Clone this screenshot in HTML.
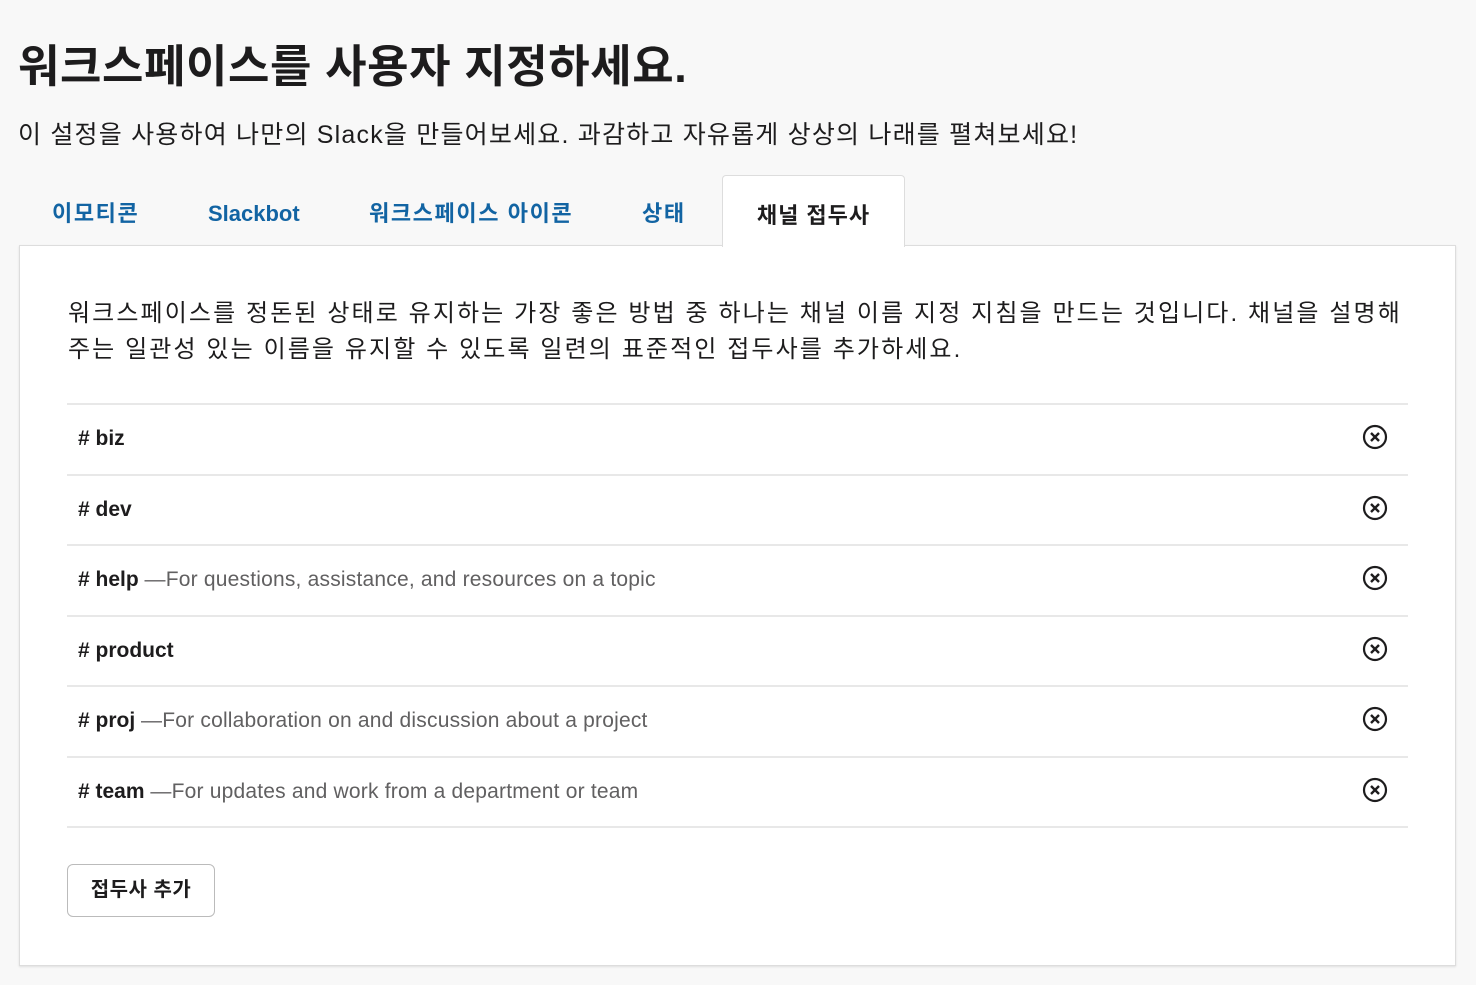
<!DOCTYPE html>
<html><head><meta charset="utf-8"><style>
*{box-sizing:border-box;margin:0;padding:0}
body{width:1476px;height:985px;background:#f8f8f8;font-family:"Liberation Sans","Noto Sans CJK KR",sans-serif;color:#1d1c1d;position:relative;overflow:hidden}
h1{position:absolute;left:18px;top:30px;font-size:45px;font-weight:bold;letter-spacing:0.6px}
.sub{position:absolute;left:18px;top:115px;font-size:25px;letter-spacing:1.2px}
.tab{position:absolute;top:198px;height:32px;line-height:32px;font-size:22px;font-weight:bold;color:#1264a3;letter-spacing:1.6px}
.active{position:absolute;left:722px;top:175px;width:183px;height:72px;background:#fff;border:1px solid #ddd;border-bottom:none;border-radius:4px 4px 0 0;z-index:2;color:#1d1c1d;font-size:22px;font-weight:bold;text-align:center;padding-top:22px;letter-spacing:1px}
.panel{position:absolute;left:19px;top:245px;width:1437px;height:721px;background:#fff;border:1px solid #ddd;box-shadow:0 1px 2px rgba(0,0,0,.1)}
.desc{position:absolute;left:48px;top:50px;font-size:24px;line-height:36px;width:1380px;letter-spacing:2.1px;white-space:nowrap}
.list{position:absolute;left:47px;top:157px;width:1341px;border-top:2px solid #e8e8e8}
.row{height:70.5px;border-bottom:2px solid #e8e8e8;position:relative;font-size:21px;padding-left:11px;line-height:68px}
.row b{font-weight:bold}
.row span{color:#616061;letter-spacing:0.2px}
.x{position:absolute;right:20px;top:19px;width:26px;height:26px}
.btn{position:absolute;left:47px;top:618px;width:148px;height:53px;border:1px solid #bbb;border-radius:6px;font-size:20px;font-weight:bold;text-align:center;line-height:50px;letter-spacing:0.5px}
</style></head><body>
<h1>워크스페이스를 사용자 지정하세요.</h1>
<div class="sub">이 설정을 사용하여 나만의 Slack을 만들어보세요. 과감하고 자유롭게 상상의 나래를 펼쳐보세요!</div>
<div class="tab" style="left:52px">이모티콘</div>
<div class="tab" style="left:208px;letter-spacing:0">Slackbot</div>
<div class="tab" style="left:369px">워크스페이스 아이콘</div>
<div class="tab" style="left:642px">상태</div>
<div class="active">채널 접두사</div>
<div class="panel">
<div class="desc">워크스페이스를 정돈된 상태로 유지하는 가장 좋은 방법 중 하나는 채널 이름 지정 지침을 만드는 것입니다. 채널을 설명해<br>주는 일관성 있는 이름을 유지할 수 있도록 일련의 표준적인 접두사를 추가하세요.</div>
<div class="list">
<div class="row"><b># biz</b><svg class="x" viewBox="0 0 26 26"><circle cx="13" cy="13" r="11" fill="none" stroke="#1d1c1d" stroke-width="2.2"/><path d="M9 9L17 17M17 9L9 17" stroke="#1d1c1d" stroke-width="2.4"/></svg></div>
<div class="row"><b># dev</b><svg class="x" viewBox="0 0 26 26"><circle cx="13" cy="13" r="11" fill="none" stroke="#1d1c1d" stroke-width="2.2"/><path d="M9 9L17 17M17 9L9 17" stroke="#1d1c1d" stroke-width="2.4"/></svg></div>
<div class="row"><b># help</b> <span>—For questions, assistance, and resources on a topic</span><svg class="x" viewBox="0 0 26 26"><circle cx="13" cy="13" r="11" fill="none" stroke="#1d1c1d" stroke-width="2.2"/><path d="M9 9L17 17M17 9L9 17" stroke="#1d1c1d" stroke-width="2.4"/></svg></div>
<div class="row"><b># product</b><svg class="x" viewBox="0 0 26 26"><circle cx="13" cy="13" r="11" fill="none" stroke="#1d1c1d" stroke-width="2.2"/><path d="M9 9L17 17M17 9L9 17" stroke="#1d1c1d" stroke-width="2.4"/></svg></div>
<div class="row"><b># proj</b> <span>—For collaboration on and discussion about a project</span><svg class="x" viewBox="0 0 26 26"><circle cx="13" cy="13" r="11" fill="none" stroke="#1d1c1d" stroke-width="2.2"/><path d="M9 9L17 17M17 9L9 17" stroke="#1d1c1d" stroke-width="2.4"/></svg></div>
<div class="row"><b># team</b> <span>—For updates and work from a department or team</span><svg class="x" viewBox="0 0 26 26"><circle cx="13" cy="13" r="11" fill="none" stroke="#1d1c1d" stroke-width="2.2"/><path d="M9 9L17 17M17 9L9 17" stroke="#1d1c1d" stroke-width="2.4"/></svg></div>
</div>
<div class="btn">접두사 추가</div>
</div>
</body></html>
